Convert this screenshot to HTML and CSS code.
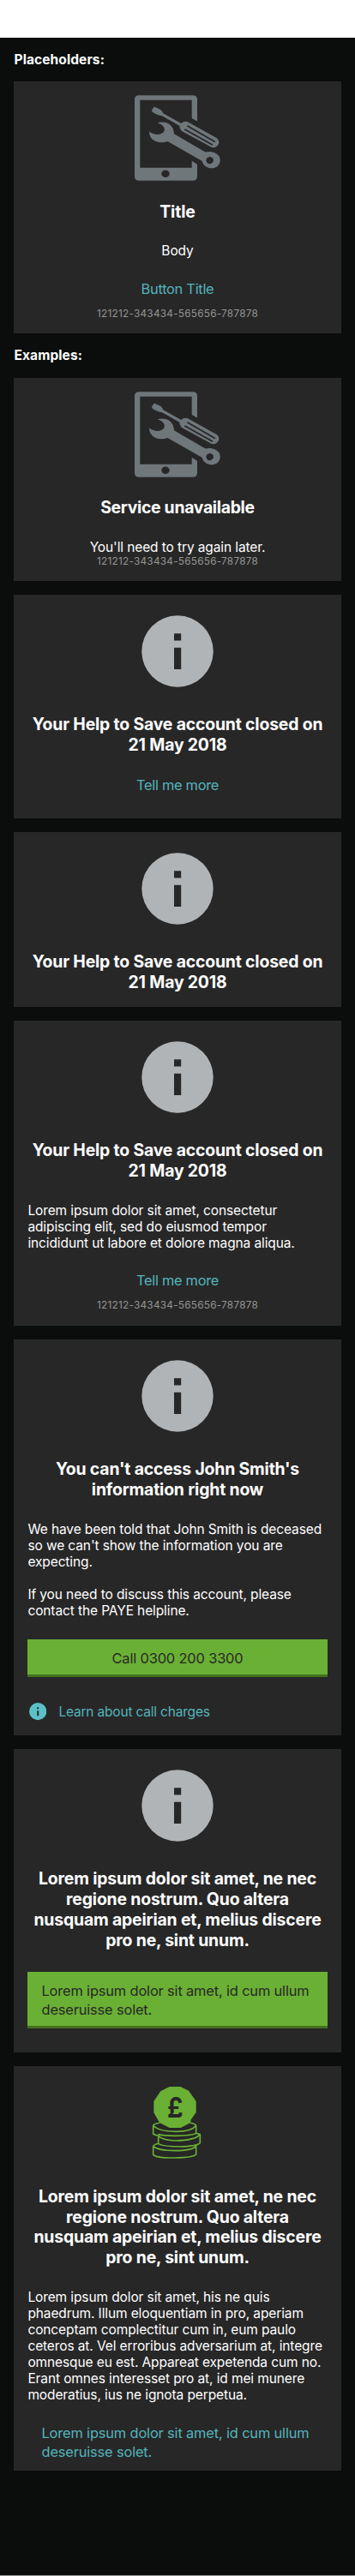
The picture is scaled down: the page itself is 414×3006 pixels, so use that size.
FILE: index.html
```html
<!DOCTYPE html>
<html lang="en">
<head>
<meta charset="utf-8">
<title>Information message cards</title>
<link rel="stylesheet" href="styles.css">
</head>
<body>
<svg class="defs" width="0" height="0" aria-hidden="true">
  <symbol id="tools" viewBox="0 0 100 100">
    <path fill-rule="evenodd" d="M5 .3H68Q73 .3 73 5.3V30.6L66.7 27V5.7H6.3V84.7H66.7V76.8L73 80.8V94.7Q73 99.7 68 99.7H5Q0 99.7 0 94.7V5.3Q0 .3 5 .3ZM36 87.4A4.7 4.3 0 1 0 36 96A4.7 4.3 0 1 0 36 87.4Z"/>
    <path d="M20 17.5L22.8 13.6L30 16.8Q32.3 18.5 33.3 21.3L54.3 33Q57.5 29.7 62 31.2L96 50.3Q99.2 53 98 57Q95.5 62 90 61L55 42Q52 39 52.4 35.8L31.5 24Q27 24 20.5 19.6Z"/>
    <path class="slot" d="M62.2 36.3L93.3 54.2M59 40.3L90.3 57.8"/>
    <path fill-rule="evenodd" d="M26.3 32.4C35 29.5 45.5 33 46 45.2L82.5 66.6C90 64.3 99.7 68 99.7 76C99.7 83.5 92 86.5 86.5 84.7C82 83.5 79.5 80.5 78.8 77L38.5 54C28 57.5 17 53.5 17 42.6C23.5 47.5 31 46.5 34.3 42.5C36.5 37.5 31.5 33.2 26.3 32.4ZM87.7 71.7L84.1 73.4L83.2 76.6L85.3 80L88.8 80.3L92 77.6L91.4 73.6Z"/>
  </symbol>
  <symbol id="info" viewBox="0 0 100 100">
    <path fill-rule="evenodd" d="M50 8.3A41.7 41.7 0 1 1 50 91.7A41.7 41.7 0 1 1 50 8.3ZM46 29.2V37.5H54.2V29.2ZM46 45.8V71H54.2V45.8Z"/>
  </symbol>
</svg>

<header class="status"></header>
<main class="page">
  <h2 class="section">Placeholders:</h2>
  <section class="card">
    <svg class="icon tools"><use href="#tools"/></svg>
    <h3 class="title">Title</h3>
    <p class="body center">Body</p>
    <a class="button link">Button Title</a>
    <p class="code">121212-343434-565656-787878</p>
  </section>

  <h2 class="section">Examples:</h2>
  <section class="card">
    <svg class="icon tools"><use href="#tools"/></svg>
    <h3 class="title tight">Service unavailable</h3>
    <p class="body center">You'll need to try again later.</p>
    <p class="code">121212-343434-565656-787878</p>
  </section>

  <section class="card">
    <svg class="icon info"><use href="#info"/></svg>
    <h3 class="title">Your Help to Save account closed on<br>21 May 2018</h3>
    <a class="button link">Tell me more</a>
  </section>

  <section class="card">
    <svg class="icon info"><use href="#info"/></svg>
    <h3 class="title">Your Help to Save account closed on<br>21 May 2018</h3>
  </section>

  <section class="card">
    <svg class="icon info"><use href="#info"/></svg>
    <h3 class="title">Your Help to Save account closed on<br>21 May 2018</h3>
    <p class="body">Lorem ipsum dolor sit amet, consectetur<br>adipiscing elit, sed do eiusmod tempor<br>incididunt ut labore et dolore magna aliqua.</p>
    <a class="button link">Tell me more</a>
    <p class="code">121212-343434-565656-787878</p>
  </section>

  <section class="card">
    <svg class="icon info"><use href="#info"/></svg>
    <h3 class="title">You can't access John Smith's<br>information right now</h3>
    <p class="body">We have been told that John Smith is deceased<br>so we can't show the information you are<br>expecting.<br><br>If you need to discuss this account, please<br>contact the PAYE helpline.</p>
    <a class="button primary">Call 0300 200 3300</a>
    <a class="help"><svg class="help-icon" viewBox="8 8 84 84"><use href="#info" width="100" height="100"/></svg><span>Learn about call charges</span></a>
  </section>

  <section class="card">
    <svg class="icon info"><use href="#info"/></svg>
    <h3 class="title">Lorem ipsum dolor sit amet, ne nec<br>regione nostrum. Quo altera<br>nusquam apeirian et, melius discere<br>pro ne, sint unum.</h3>
    <a class="button primary multiline last">Lorem ipsum dolor sit amet, id cum ullum<br>deseruisse solet.</a>
  </section>

  <section class="card flush">
    <svg class="icon coins" viewBox="0 0 100 100">
      <g transform="translate(-7 -7.7) scale(.33333)">
        <path class="rim" d="M108 174Q88 178 86 183V213Q94 217 104 218M86 183Q104 203 162 204T236 183V210Q230 218 162 219Q122 219 104 214M236 183Q233 177 216 174M104 217V247M104 219Q116 235 166 236Q232 235 250 214V244Q238 256 180 257Q122 257 104 247M236 210L250 214M104 246Q88 250 86 256V285Q98 297 162 296T236 284V254M86 256Q104 271 162 271T236 256"/>
        <path d="M143 47H181L210 61L219 74L236 98V137L217 164V173L182 191H143L108 173L88 138V98L112 63Z"/>
      </g>
      <text class="pound" x="38" y="43.6" textLength="18.6" lengthAdjust="spacingAndGlyphs">£</text>
    </svg>
    <h3 class="title">Lorem ipsum dolor sit amet, ne nec<br>regione nostrum. Quo altera<br>nusquam apeirian et, melius discere<br>pro ne, sint unum.</h3>
    <p class="body">Lorem ipsum dolor sit amet, his ne quis<br>phaedrum. Illum eloquentiam in pro, aperiam<br>conceptam complectitur cum in, eum paulo<br>ceteros at. Vel erroribus adversarium at, integre<br>omnesque eu est. Appareat expetenda cum no.<br>Erant omnes interesset pro at, id mei munere<br>moderatius, ius ne ignota perpetua.</p>
    <a class="button link multiline">Lorem ipsum dolor sit amet, id cum ullum<br>deseruisse solet.</a>
  </section>
</main>
</body>
</html>
```
FILE: styles.css
```css
* { box-sizing: border-box; margin: 0; padding: 0; }
body {
  background: #fff;
  font-family: Inter, "Liberation Sans", sans-serif;
  color: #fff;
}
.defs { display: block; height: 0; }
.status { height: 44px; }
.page {
  height: 2962px;
  padding: 0 16px;
  background: #0a0d0c;
  border-bottom: 1px solid #949595;
}
.section {
  height: 51.3px;
  padding: 16px 0 0 0.5px;
  font-size: 15.5px;
  line-height: 19px;
  font-weight: 700;
  letter-spacing: 0.1px;
}
.card {
  display: flex;
  flex-direction: column;
  padding: 16px;
  background: #272727;
  white-space: nowrap;
}
.card + .card { margin-top: 16px; }
.card.flush { padding-bottom: 0; }
.icon { width: 100px; height: 100px; align-self: center; margin-bottom: 24.25px; }
.tools { fill: #6f777b; }
.info { fill: #b1b4b6; }
.coins { fill: #6ab034; }
.slot { fill: none; stroke: #272727; stroke-width: 1.8; stroke-linecap: round; }
.rim { fill: none; stroke: #6ab034; stroke-width: 5; stroke-linejoin: round; }
.pound { fill: #272727; font-size: 32px; font-weight: 700; }
.title {
  font-size: 19.4px;
  line-height: 23.85px;
  font-weight: 700;
  letter-spacing: -0.17px;
  text-align: center;
}
.title.tight { letter-spacing: -0.31px; }
.body {
  margin-top: 24px;
  padding-left: 0.4px;
  font-size: 15.5px;
  line-height: 19.07px;
  letter-spacing: -0.11px;
}
.body.center { padding: 0; text-align: center; }
.button {
  display: block;
  padding: 11.3px 0;
  font-size: 16.4px;
  line-height: 22px;
  letter-spacing: -0.15px;
  text-align: center;
}
.link { margin-top: 12px; color: #53b5bc; }
.link:not(.multiline) { letter-spacing: -0.28px; }
.primary {
  margin-top: 24px;
  padding-bottom: 8.3px;
  background: #6ab034;
  border-bottom: 3px solid #43701f;
  color: #272727;
}
.button.multiline { padding-left: 16.5px; text-align: left; }
.last { margin-bottom: 12px; }
.code {
  font-size: 11.8px;
  line-height: 14.3px;
  letter-spacing: 0.24px;
  color: #949494;
  text-align: center;
}
.help {
  display: flex;
  align-items: center;
  gap: 14px;
  height: 36px;
  margin-top: 22px;
  margin-bottom: -6.3px;
  padding-left: 2px;
  color: #53b5bc;
  font-size: 15.5px;
  line-height: 19px;
  letter-spacing: -0.19px;
}
.help-icon { width: 20.4px; height: 20.4px; fill: #5bc0c8; }
```
